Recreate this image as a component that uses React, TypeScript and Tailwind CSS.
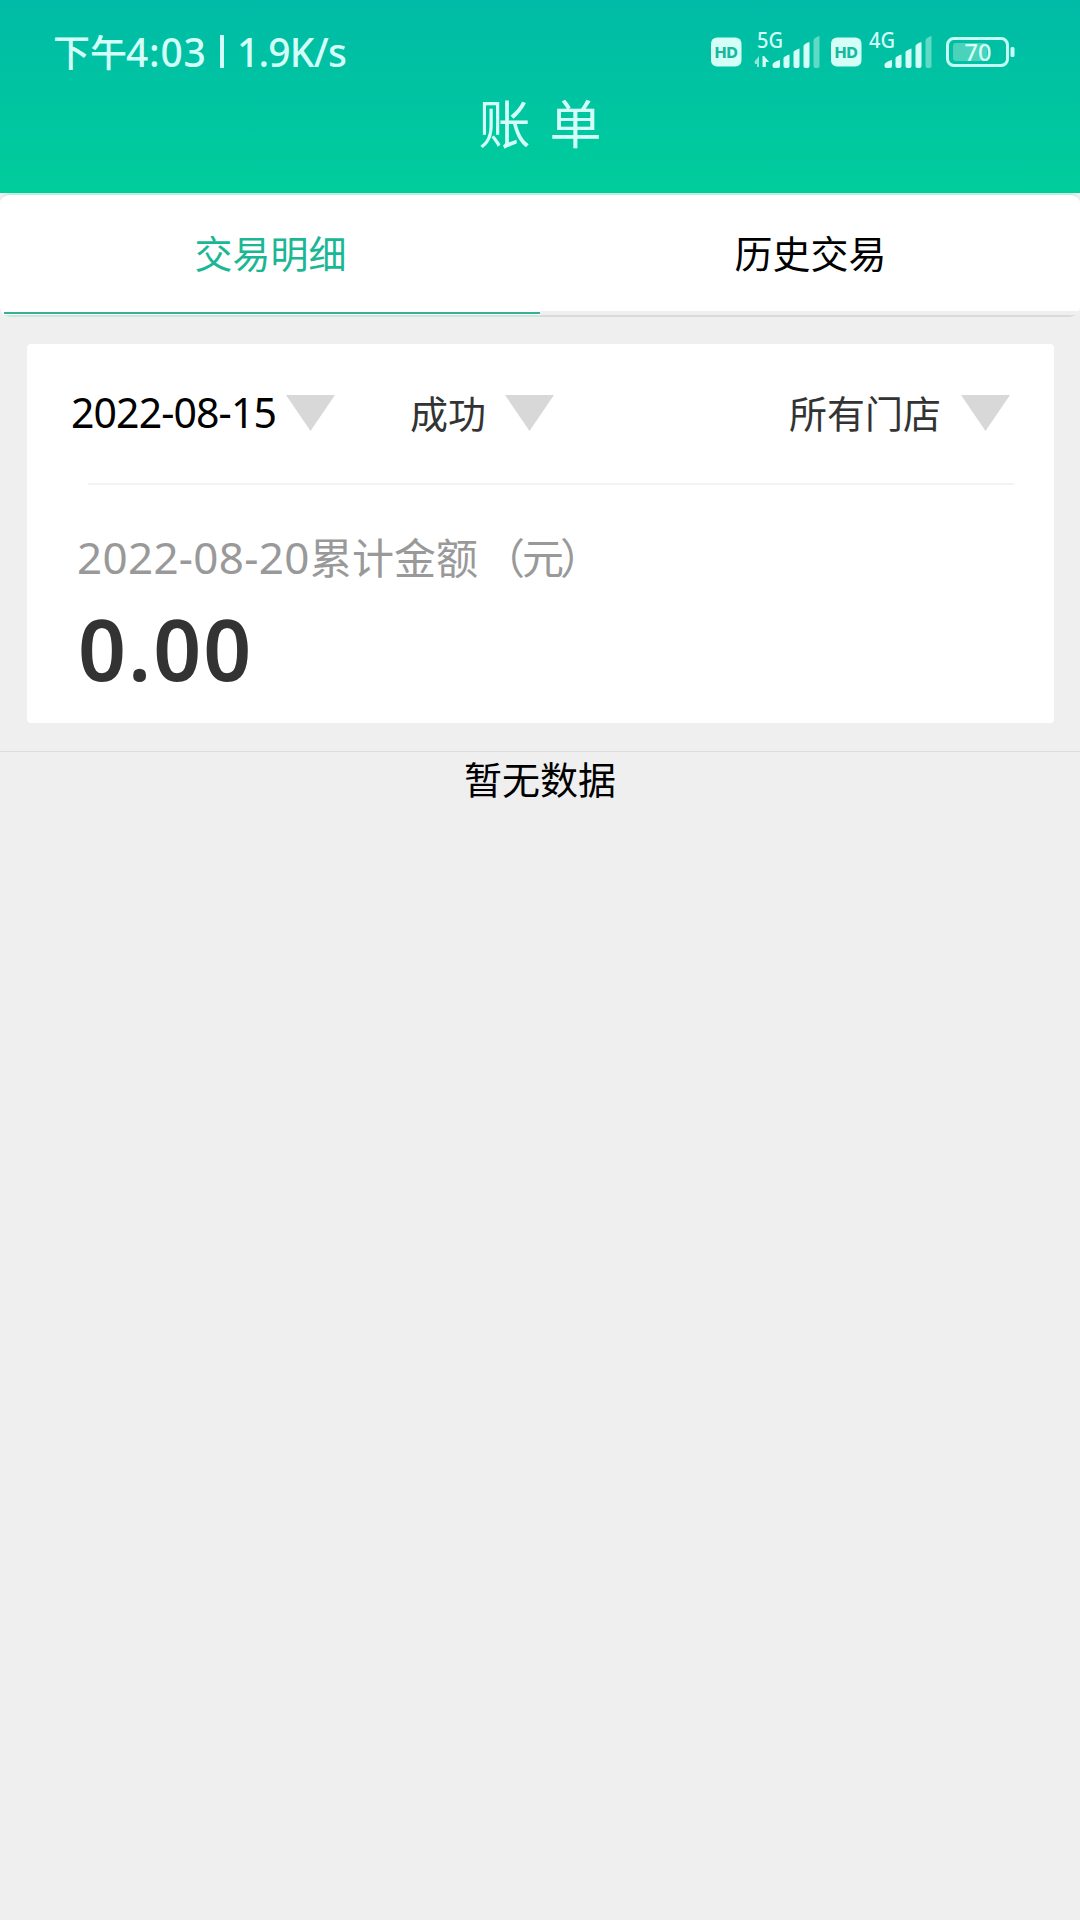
import type { ReactNode } from 'react';

const TABS = [
  { label: '交易明细', active: true },
  { label: '历史交易', active: false },
];

function HdBadge() {
  return (
    <svg width="31" height="31" viewBox="0 0 31 31">
      <rect x="0" y="1.5" width="30.500" height="29" rx="6" fill="#d3fff6" />
      <text
        x="15.2"
        y="21.5"
        textAnchor="middle"
        textLength="23"
        lengthAdjust="spacingAndGlyphs"
        className="fill-[#16b89f] font-['Inter'] text-[15px] font-extrabold"
      >
        HD
      </text>
    </svg>
  );
}

function Signal({ label, arrows = false }: { label: string; arrows?: boolean }) {
  return (
    <svg width="66" height="48" viewBox="0 -5 66 48" className="overflow-visible">
      <text
        x="2"
        y="18"
        textLength="26"
        lengthAdjust="spacingAndGlyphs"
        className="fill-[#d3fff6] font-['Noto_Sans'] text-[21px] font-medium"
      >
        {label}
      </text>
      {arrows && (
        <>
          <path d="M-0.500 31.500l4.500-5.500V37H2v-3H0z" fill="#8ae8d4" />
          <path d="M7.500 26h1.600l5 6h-3.300V37H7.500z" fill="#d3fff6" />
        </>
      )}
      <g fill="#d3fff6">
        <path d="M17.500 35q0-3 7.500-5v6q0 2-2 2h-3.500q-2 0-2-2z" />
        <path d="M28.500 28q1-2 6-3.500v11.500q0 2-2 2h-2q-2 0-2-2z" />
        <path d="M38.500 22q1-2 6-3.500v17.500q0 2-2 2h-2q-2 0-2-2z" />
        <path d="M48.500 16q1-2.500 6-4v24q0 2-2 2h-2q-2 0-2-2z" />
      </g>
      <path d="M58.500 10q1-2.500 6-4v30q0 2-2 2h-2q-2 0-2-2z" fill="#5fdac4" />
    </svg>
  );
}

function Battery() {
  return (
    <svg width="70" height="32" viewBox="0 0 70 32">
      <rect x="1.500" y="2.500" width="60" height="27" rx="6.500" fill="none" stroke="#c4fff3" strokeWidth="3" />
      <rect x="7" y="7" width="34" height="18" rx="3" fill="#4bd2ba" />
      <rect x="64.500" y="11" width="4" height="10" rx="1.500" fill="#c4fff3" />
      <text
        x="32"
        y="24.5"
        textAnchor="middle"
        textLength="27"
        lengthAdjust="spacingAndGlyphs"
        className="fill-[#d3fff6] font-['Noto_Sans'] text-[24px] font-medium"
      >
        70
      </text>
    </svg>
  );
}

function StatusBar() {
  return (
    <div className="flex h-[103px] items-center justify-between pr-[64px] pl-[53px] text-[#d3fff8]">
      <div className="flex items-center font-medium whitespace-pre">
        <span className="text-[37px] leading-none">下午</span>
        <span className="ml-[-1px] w-[94px] font-['Noto_Sans'] text-[39px] leading-none tracking-[0.8px]">4:03</span>
        <span className="mr-[13px] h-[33px] w-[4px] bg-[#d3fff8]" />
        <span className="font-['Noto_Sans'] text-[39px] leading-none tracking-[-0.8px]">1.9K/s</span>
      </div>
      <div className="flex items-center">
        <HdBadge />
        <div className="ml-[13px] -mt-[5px]">
          <Signal label="5G" arrows />
        </div>
        <div className="ml-[10px]">
          <HdBadge />
        </div>
        <div className="ml-[5px] -mt-[5px]">
          <Signal label="4G" />
        </div>
        <div className="ml-[13px]">
          <Battery />
        </div>
      </div>
    </div>
  );
}

function Filter({ children, className }: { children: ReactNode; className: string }) {
  return (
    <button type="button" className={`flex items-center whitespace-nowrap ${className}`}>
      <span className="-mt-[4px]">{children}</span>
      <svg width="50" height="36" viewBox="0 0 50 36" className="-mt-[2px]">
        <path d="M0 0h49L24.500 36z" fill="#d8d8d8" />
      </svg>
    </button>
  );
}

export default function App() {
  return (
    <div className="min-h-[1920px] w-[1080px] bg-[#efefef] font-['Noto_Sans_CJK_SC',sans-serif] text-black">
      <header className="h-[193px] bg-linear-to-b from-[#00bba6] to-[#00cd9c]">
        <StatusBar />
        <h1 className="flex justify-center gap-[19px] text-[52px] leading-[38px] text-[#d3fff8]">
          <span>账</span>
          <span>单</span>
        </h1>
      </header>

      <nav className="flex h-[124px] overflow-hidden rounded-[10px] border-t-2 border-[#bdeee3]">
        {TABS.map((tab) => (
          <div
            key={tab.label}
            className={`flex w-1/2 flex-col border-b-2 bg-white text-[38px] leading-none ${
              tab.active ? 'border-[#c6e8e0] text-[#1bb795]' : 'border-[#dadada] text-black'
            }`}
          >
            <div className="flex h-[116px] items-center justify-center pb-[2px] pl-[1px]">{tab.label}</div>
            {tab.active ? (
              <div className="mt-px ml-[4px] h-[2px] bg-[#38b193]" />
            ) : (
              <div className="h-[4px] bg-[#efefef]" />
            )}
          </div>
        ))}
      </nav>

      <section className="mr-[26px] ml-[27px] mt-[27px] h-[379px] rounded-[4px] bg-white">
        <div className="flex h-[139px] items-center pr-[43px] pl-[44px] text-[38px] leading-none text-[#333]">
          <Filter className="gap-[10px]">
            <span className="block w-[205px] pt-[2px] text-left font-['Noto_Sans'] text-[41px] tracking-[-0.9px] text-black">
              2022-08-15
            </span>
          </Filter>
          <Filter className="ml-[74px] gap-[19px]">成功</Filter>
          <Filter className="ml-auto gap-[20px]">所有门店</Filter>
        </div>
        <hr className="mr-[40px] ml-[61px] border-t-2 border-[#f3f3f3]" />
        <div className="pt-[51px] pl-[50px]">
          <p className="flex h-[40px] items-center text-[42px] leading-none text-[#999]">
            <span className="w-[233px] pt-[1px] font-['Noto_Sans'] text-[44px] tracking-[0.3px]">2022-08-20</span>
            <span>累计金额</span>
            <span className="ml-[5px]">（</span>
            <span className="ml-[-3px]">元</span>
            <span className="ml-[-4px]">）</span>
          </p>
          <p className="mt-[39px] ml-[1px] font-['Noto_Sans'] text-[84px] leading-[67px] font-semibold tracking-[2px] text-[#333]">
            0.00
          </p>
        </div>
      </section>

      <div className="mt-[28px] border-t border-[#dcdcdc] pt-[7px] text-center text-[38px] leading-[38px]">
        暂无数据
      </div>
    </div>
  );
}
